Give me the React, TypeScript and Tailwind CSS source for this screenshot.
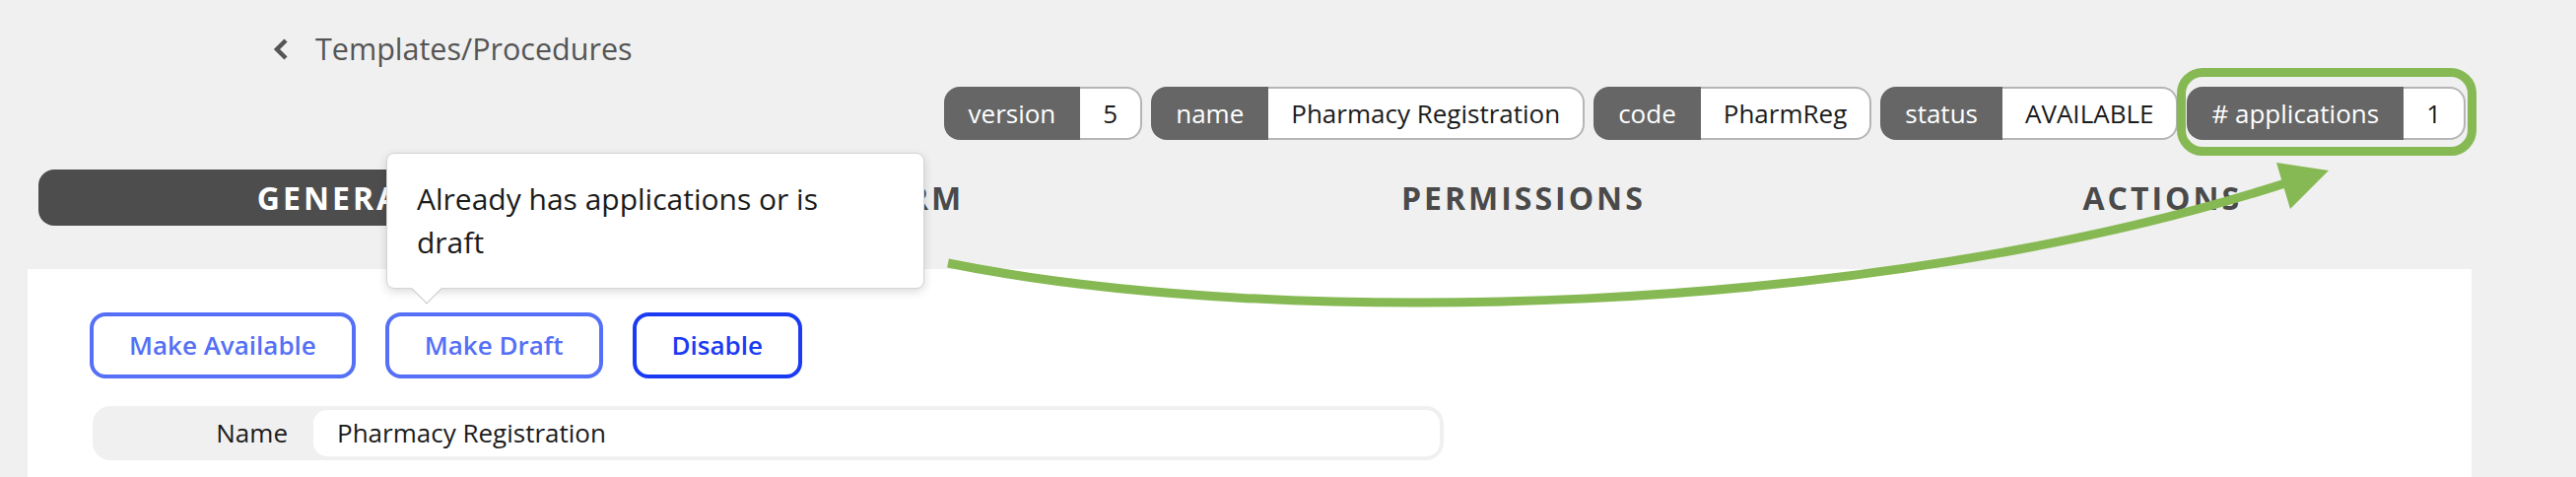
const tags = [
  { label: "version", value: "5" },
  { label: "name", value: "Pharmacy Registration" },
  { label: "code", value: "PharmReg" },
  { label: "status", value: "AVAILABLE" },
  { label: "# applications", value: "1" },
]

const tabs = ["GENERAL", "FORM", "PERMISSIONS", "ACTIONS"]

function Tag({ label, value }: { label: string; value: string }) {
  return (
    <div className="flex h-[54px] text-[26px] leading-none">
      <span className="flex items-center rounded-l-[16px] bg-[#666666] px-[25px] text-white">{label}</span>
      <span className="flex items-center rounded-r-[16px] border-2 border-l-0 border-[#b5b5b5] bg-white px-[23px] text-[#1b1b1b]">
        {value}
      </span>
    </div>
  )
}

export default function App() {
  return (
    <div className="relative h-[484px] w-[2614px] overflow-hidden bg-[#f0f0f0] font-['Open_Sans',sans-serif]">
      <div className="ml-[28px] w-[2480px]">
        {/* breadcrumb */}
        <div className="mt-[30px] flex h-[40px] items-center gap-[26px] pl-[249px] text-[30.5px] text-[#555555]">
          <svg width="17" height="24" viewBox="0 0 17 24">
            <polyline points="13,3 4,12 13,21" fill="none" stroke="#555555" strokeWidth="4.5" />
          </svg>
          <span>Templates/Procedures</span>
        </div>

        {/* header tags */}
        <div className="mt-[18px] flex justify-end gap-[9px] pr-[6px]">
          {tags.map((t) => (
            <Tag key={t.label} label={t.label} value={t.value} />
          ))}
        </div>

        {/* tabs */}
        <div className="mx-[11px] mt-[30px] flex h-[57px]">
          {tabs.map((tab, idx) => (
            <div
              key={tab}
              className={
                idx === 0
                  ? "flex flex-auto items-center justify-center rounded-[16px] bg-[#4d4d4d] text-[32px] font-bold tracking-[3px] text-white"
                  : "flex flex-auto items-center justify-center text-[32px] font-bold tracking-[3px] text-[#4a4a4a]"
              }
            >
              {tab}
            </div>
          ))}
        </div>

        {/* panel */}
        <div className="mt-[44px] h-[211px] bg-white pl-[63px] pt-[44px]">
          <div className="flex gap-[30px]">
            <button className="h-[67px] rounded-[16px] border-4 border-[#5570f6] px-[36px] text-[26px] font-semibold text-[#5570f6]">
              Make Available
            </button>
            <button className="h-[67px] rounded-[16px] border-4 border-[#5570f6] px-[36px] text-[26px] font-semibold text-[#5570f6]">
              Make Draft
            </button>
            <button className="h-[67px] rounded-[16px] border-4 border-[#1b3bf2] px-[36px] text-[26px] font-semibold text-[#1b3bf2]">
              Disable
            </button>
          </div>

          <div className="ml-[3px] mt-[28px] flex h-[55px] w-[1371px] rounded-[18px] bg-[#f0f0f0] p-[4px] text-[26px] text-[#1b1b1b]">
            <div className="flex w-[220px] items-center justify-end pr-[26px]">Name</div>
            <div className="flex flex-1 items-center rounded-[14px] bg-white pl-[24px]">Pharmacy Registration</div>
          </div>
        </div>
      </div>

      {/* tooltip */}
      <div className="absolute left-[392px] top-[155px] w-[546px] rounded-[8px] border border-[#d4d4d5] bg-white py-[24px] pl-[30px] pr-[54px] text-[30px] leading-[44px] text-[#1b1b1b] shadow-[0_3px_10px_rgba(0,0,0,0.15)]">
        Already has applications or is draft
        <div className="absolute left-[29px] top-[126px] h-[22px] w-[22px] rotate-45 border-b border-r border-[#c8c8c8] bg-white" />
      </div>

      {/* annotation */}
      <div className="absolute left-[2209px] top-[69px] h-[89px] w-[304px] rounded-[26px] border-[9px] border-[#86b953]" />
      <svg className="pointer-events-none absolute left-0 top-0" width="2614" height="484" viewBox="0 0 2614 484">
        <path d="M962 267 C1300 335, 1900 322, 2322 185" fill="none" stroke="#86b953" strokeWidth="9" />
        <polygon points="2310,165 2363,173 2324,212" fill="#86b953" />
      </svg>
    </div>
  )
}
